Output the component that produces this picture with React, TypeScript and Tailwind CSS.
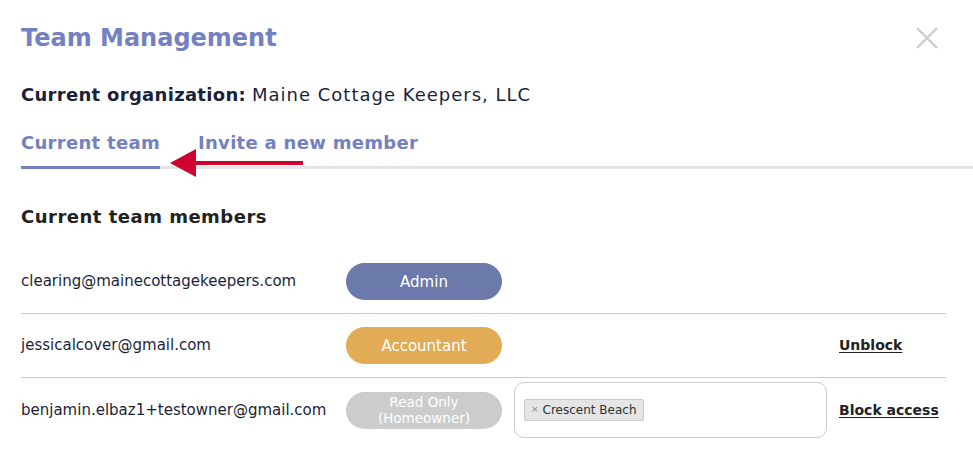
import React from "react";

const font = { fontFamily: '"DejaVu Sans", "Noto Sans", sans-serif' };

function Pill({ children, className }: { children: React.ReactNode; className: string }) {
  return (
    <div
      className={`w-[156px] h-[37px] rounded-full flex flex-col items-center justify-center text-white text-center ${className}`}
    >
      {children}
    </div>
  );
}

export default function App() {
  const rows = [
    {
      email: "clearing@mainecottagekeepers.com",
      pill: <Pill className="bg-[#6b7aab] text-[15px] leading-[18px]">Admin</Pill>,
      select: false,
      action: "",
    },
    {
      email: "jessicalcover@gmail.com",
      pill: <Pill className="bg-[#e2ab55] text-[15px] leading-[18px]">Accountant</Pill>,
      select: false,
      action: "Unblock",
    },
    {
      email: "benjamin.elbaz1+testowner@gmail.com",
      pill: (
        <Pill className="bg-[#cccccc] text-[13.5px] leading-[16px]">
          <span>Read Only</span>
          <span>(Homeowner)</span>
        </Pill>
      ),
      select: true,
      action: "Block access",
    },
  ];
  return (
    <div className="w-[973px] h-[476px] bg-white overflow-hidden relative" style={font}>
      <div className="pl-[21px] pt-[22px]">
        <div className="flex items-center justify-between pr-[35px] h-[32px]">
          <h1 className="text-[24px] font-bold text-[#7381c2] leading-[32px]">Team Management</h1>
          <svg width="22" height="22" viewBox="0 0 22 22" className="text-[#cccccc]">
            <path d="M1 1 L21 21 M21 1 L1 21" stroke="currentColor" strokeWidth="2.4" />
          </svg>
        </div>
        <div className="mt-[27px] h-[26px] flex items-center text-[18px] text-[#1b1f3b]">
          <span className="font-bold tracking-[0.3px]">Current organization:</span>
          <span className="ml-[6px] tracking-[1px]">Maine Cottage Keepers, LLC</span>
        </div>
        <div className="mt-[24px] flex border-b-[3px] border-[#e5e5e5] relative">
          <div className="text-[18px] font-bold text-[#7381c2] leading-[24px] pb-[11px] border-b-[3px] border-[#7381c2] -mb-[3px] tracking-[0.3px]">
            Current team
          </div>
          <div className="ml-[38px] text-[18px] font-bold text-[#7381c2] leading-[24px] pb-[11px] tracking-[0.3px]">
            Invite a new member
          </div>
          <svg
            className="absolute left-[149px] top-[17px]"
            width="135"
            height="30"
            viewBox="0 0 135 30"
          >
            <rect x="22" y="13" width="111" height="4" fill="#d0022f" />
            <polygon points="0,15 26,1 26,29" fill="#d0022f" />
          </svg>
        </div>
        <div className="pr-[27px]">
          <h2 className="mt-[36px] text-[18px] font-bold text-[#222222] leading-[24px] tracking-[0.5px]">
            Current team members
          </h2>
          <div className="mt-[21px]">
            {rows.map((r, i) => (
              <div
                key={i}
                className={`flex items-center h-[64px] ${i < rows.length - 1 ? "border-b border-[#cccccc]" : ""}`}
              >
                <div className="w-[325px] text-[15px] text-[#1b1f3b]">{r.email}</div>
                {r.pill}
                <div className="w-[313px] ml-[12px] h-[56px]">
                  {r.select && (
                    <div className="h-[56px] border border-[#cccccc] rounded-[10px] flex items-center pl-[9px]">
                      <span className="h-[22px] px-[6px] flex items-center bg-[#e5e5e5] border border-[#cccccc] rounded-[2px] text-[12px] text-[#333333]">
                        <span className="text-[9px] text-[#888888] mr-[4px]">×</span>
                        Crescent Beach
                      </span>
                    </div>
                  )}
                </div>
                <div className="ml-[12px] text-[14px] font-bold underline text-[#222222] underline-offset-2">
                  {r.action}
                </div>
              </div>
            ))}
          </div>
        </div>
      </div>
    </div>
  );
}
